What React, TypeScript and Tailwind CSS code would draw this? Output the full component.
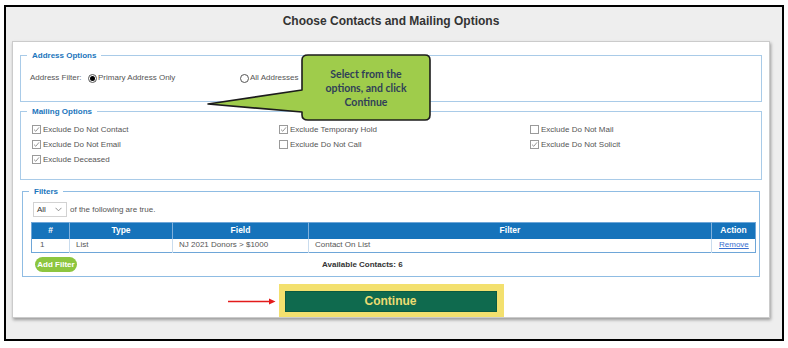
import React from 'react'

const checks = [
  [
    { label: 'Exclude Do Not Contact', on: true },
    { label: 'Exclude Do Not Email', on: true },
    { label: 'Exclude Deceased', on: true },
  ],
  [
    { label: 'Exclude Temporary Hold', on: true },
    { label: 'Exclude Do Not Call', on: false },
  ],
  [
    { label: 'Exclude Do Not Mail', on: false },
    { label: 'Exclude Do Not Solicit', on: true },
  ],
]

function Box({ on }: { on: boolean }) {
  return (
    <span className="w-[9px] h-[9px] border border-[#9a9a9a] bg-white flex items-center justify-center shrink-0">
      {on && (
        <svg width="7" height="7" viewBox="0 0 7 7">
          <path d="M1 3.6 L2.8 5.3 L6 1.4" fill="none" stroke="#8a8a8a" strokeWidth="0.9" />
        </svg>
      )}
    </span>
  )
}

function Radio({ on }: { on: boolean }) {
  return (
    <span className="w-[9px] h-[9px] rounded-full border border-[#555] bg-white flex items-center justify-center shrink-0">
      {on && <span className="w-[5px] h-[5px] rounded-full bg-black" />}
    </span>
  )
}

export default function App() {
  return (
    <div className="relative w-[788px] h-[348px] bg-white pl-[4px] pt-[5px] font-['Liberation_Sans',Arial,sans-serif] text-[#444]">
      <div className="w-[780px] h-[336px] border-2 border-black bg-[#eeeeee] pl-[6px]">
        {/* Title */}
        <h1 className="w-[758px] h-[34px] pt-[7px] leading-[15px] text-center text-[12px] font-bold text-[#333]">
          Choose Contacts and Mailing Options
        </h1>

        {/* Card */}
        <div className="w-[758px] h-[277px] border border-[#cbcbcb] bg-white shadow-[1px_2px_3px_rgba(0,0,0,0.35)] px-[7px] pt-[8px] text-[8px]">
          {/* Address options */}
          <fieldset className="border border-[#a9cbe8] pb-[17px]">
            <legend className="ml-[6px] px-[5px] leading-[11px] font-bold text-[#1b75bc]">Address Options</legend>
            <div className="mt-[11px] pl-[9px] flex items-center leading-[12px] text-[#555]">
              <span className="w-[58px]">Address Filter:</span>
              <label className="w-[152px] flex items-center gap-[1px]">
                <Radio on={true} />
                <span>Primary Address Only</span>
              </label>
              <label className="flex items-center gap-[1px]">
                <Radio on={false} />
                <span>All Addresses</span>
              </label>
            </div>
          </fieldset>

          {/* Mailing options */}
          <fieldset className="mt-[4px] border border-[#a9cbe8] pb-[12px]">
            <legend className="ml-[6px] px-[5px] leading-[11px] font-bold text-[#1b75bc]">Mailing Options</legend>
            <div className="mt-[5px] pl-[11px] grid grid-cols-[247px_251px_1fr] text-[#555]">
              {checks.map((col, i) => (
                <div key={i} className="flex flex-col">
                  {col.map((c) => (
                    <label key={c.label} className="h-[15px] flex items-center gap-[2px]">
                      <Box on={c.on} />
                      <span>{c.label}</span>
                    </label>
                  ))}
                </div>
              ))}
            </div>
          </fieldset>

          {/* Filters */}
          <fieldset className="mt-[6px] mx-[2px] border border-[#8fbce3] pb-[4px]">
            <legend className="ml-[6px] px-[5px] leading-[11px] font-bold text-[#1b75bc]">Filters</legend>
            <div className="mt-[5px] flex items-center text-[#555]">
              <div className="ml-[10px] w-[34px] h-[15px] border border-[#d2d2d2] bg-white flex items-center justify-between pl-[3px] pr-[4px] text-[#333]">
                <span>All</span>
                <svg width="7" height="5" viewBox="0 0 7 5">
                  <path d="M0.5 0.8 L3.5 3.8 L6.5 0.8" fill="none" stroke="#777" strokeWidth="0.8" />
                </svg>
              </div>
              <span className="ml-[3px]">of the following are true.</span>
            </div>

            <table className="mt-[5px] ml-[8px] w-[724px] border-collapse border border-[#6ea6d8] table-fixed">
              <colgroup>
                <col className="w-[38px]" />
                <col className="w-[103px]" />
                <col className="w-[136px]" />
                <col className="w-[403px]" />
                <col className="w-[44px]" />
              </colgroup>
              <thead>
                <tr className="h-[16px] bg-[#1673bb] text-white font-bold text-[8.5px]">
                  <th className="border-r border-[#7fb0dc]">#</th>
                  <th className="border-r border-[#7fb0dc]">Type</th>
                  <th className="border-r border-[#7fb0dc]">Field</th>
                  <th className="border-r border-[#7fb0dc]">Filter</th>
                  <th>Action</th>
                </tr>
              </thead>
              <tbody>
                <tr className="h-[14px] text-[#555]">
                  <td className="pl-[8px] border-r border-[#c9dcee]">1</td>
                  <td className="pl-[6px] border-r border-[#c9dcee]">List</td>
                  <td className="pl-[6px] border-r border-[#c9dcee]">NJ 2021 Donors &gt; $1000</td>
                  <td className="pl-[6px] border-r border-[#c9dcee]">Contact On List</td>
                  <td className="pl-[7px]">
                    <span className="underline text-[#3a6fd0]">Remove</span>
                  </td>
                </tr>
              </tbody>
            </table>

            <div className="mt-[4px] flex items-center">
              <button className="ml-[12px] w-[42px] h-[15px] rounded-full bg-[#8dc63f] text-white font-bold text-[8px] leading-[15px]">
                Add Filter
              </button>
              <span className="ml-[245px] font-bold text-[#333]">Available Contacts: 6</span>
            </div>
          </fieldset>

          {/* Continue */}
          <div className="relative mt-[7px] mx-auto w-[225px] h-[33px] bg-[#f3e06e] pl-[6px] pt-[7px]">
            <svg className="absolute left-[-51px] top-[14px]" width="48" height="7" viewBox="0 0 48 7">
              <path d="M0 3.5 H42" stroke="#e31b1b" strokeWidth="1.6" />
              <path d="M41 0.5 L47.5 3.5 L41 6.5 Z" fill="#e31b1b" />
            </svg>
            <button className="w-[212px] h-[21px] bg-[#0f6a4e] border border-[#0b5a41] text-[#ecdc72] font-bold text-[12px] leading-[19px]">
              Continue
            </button>
          </div>
        </div>
      </div>

      {/* Callout */}
      <svg className="absolute left-[205px] top-[52px]" width="230" height="72" viewBox="0 0 230 72">
        <path
          d="M103 3 H220 Q225 3 225 8 V63 Q225 68 220 68 H103 Q97 68 97 63 V60 L3 52 L97 38 V8 Q97 3 103 3 Z"
          fill="#9fcc4b"
          stroke="#1c1c1c"
          strokeWidth="1.6"
          strokeLinejoin="round"
        />
      </svg>
      <div className="absolute left-[302px] top-[55px] w-[128px] h-[65px] flex items-center justify-center text-center font-['Lato',sans-serif] font-bold text-[10.5px] leading-[14px] text-[#2f4058]">
        <span>
          Select from the
          <br />
          options, and click
          <br />
          Continue
        </span>
      </div>
    </div>
  )
}
